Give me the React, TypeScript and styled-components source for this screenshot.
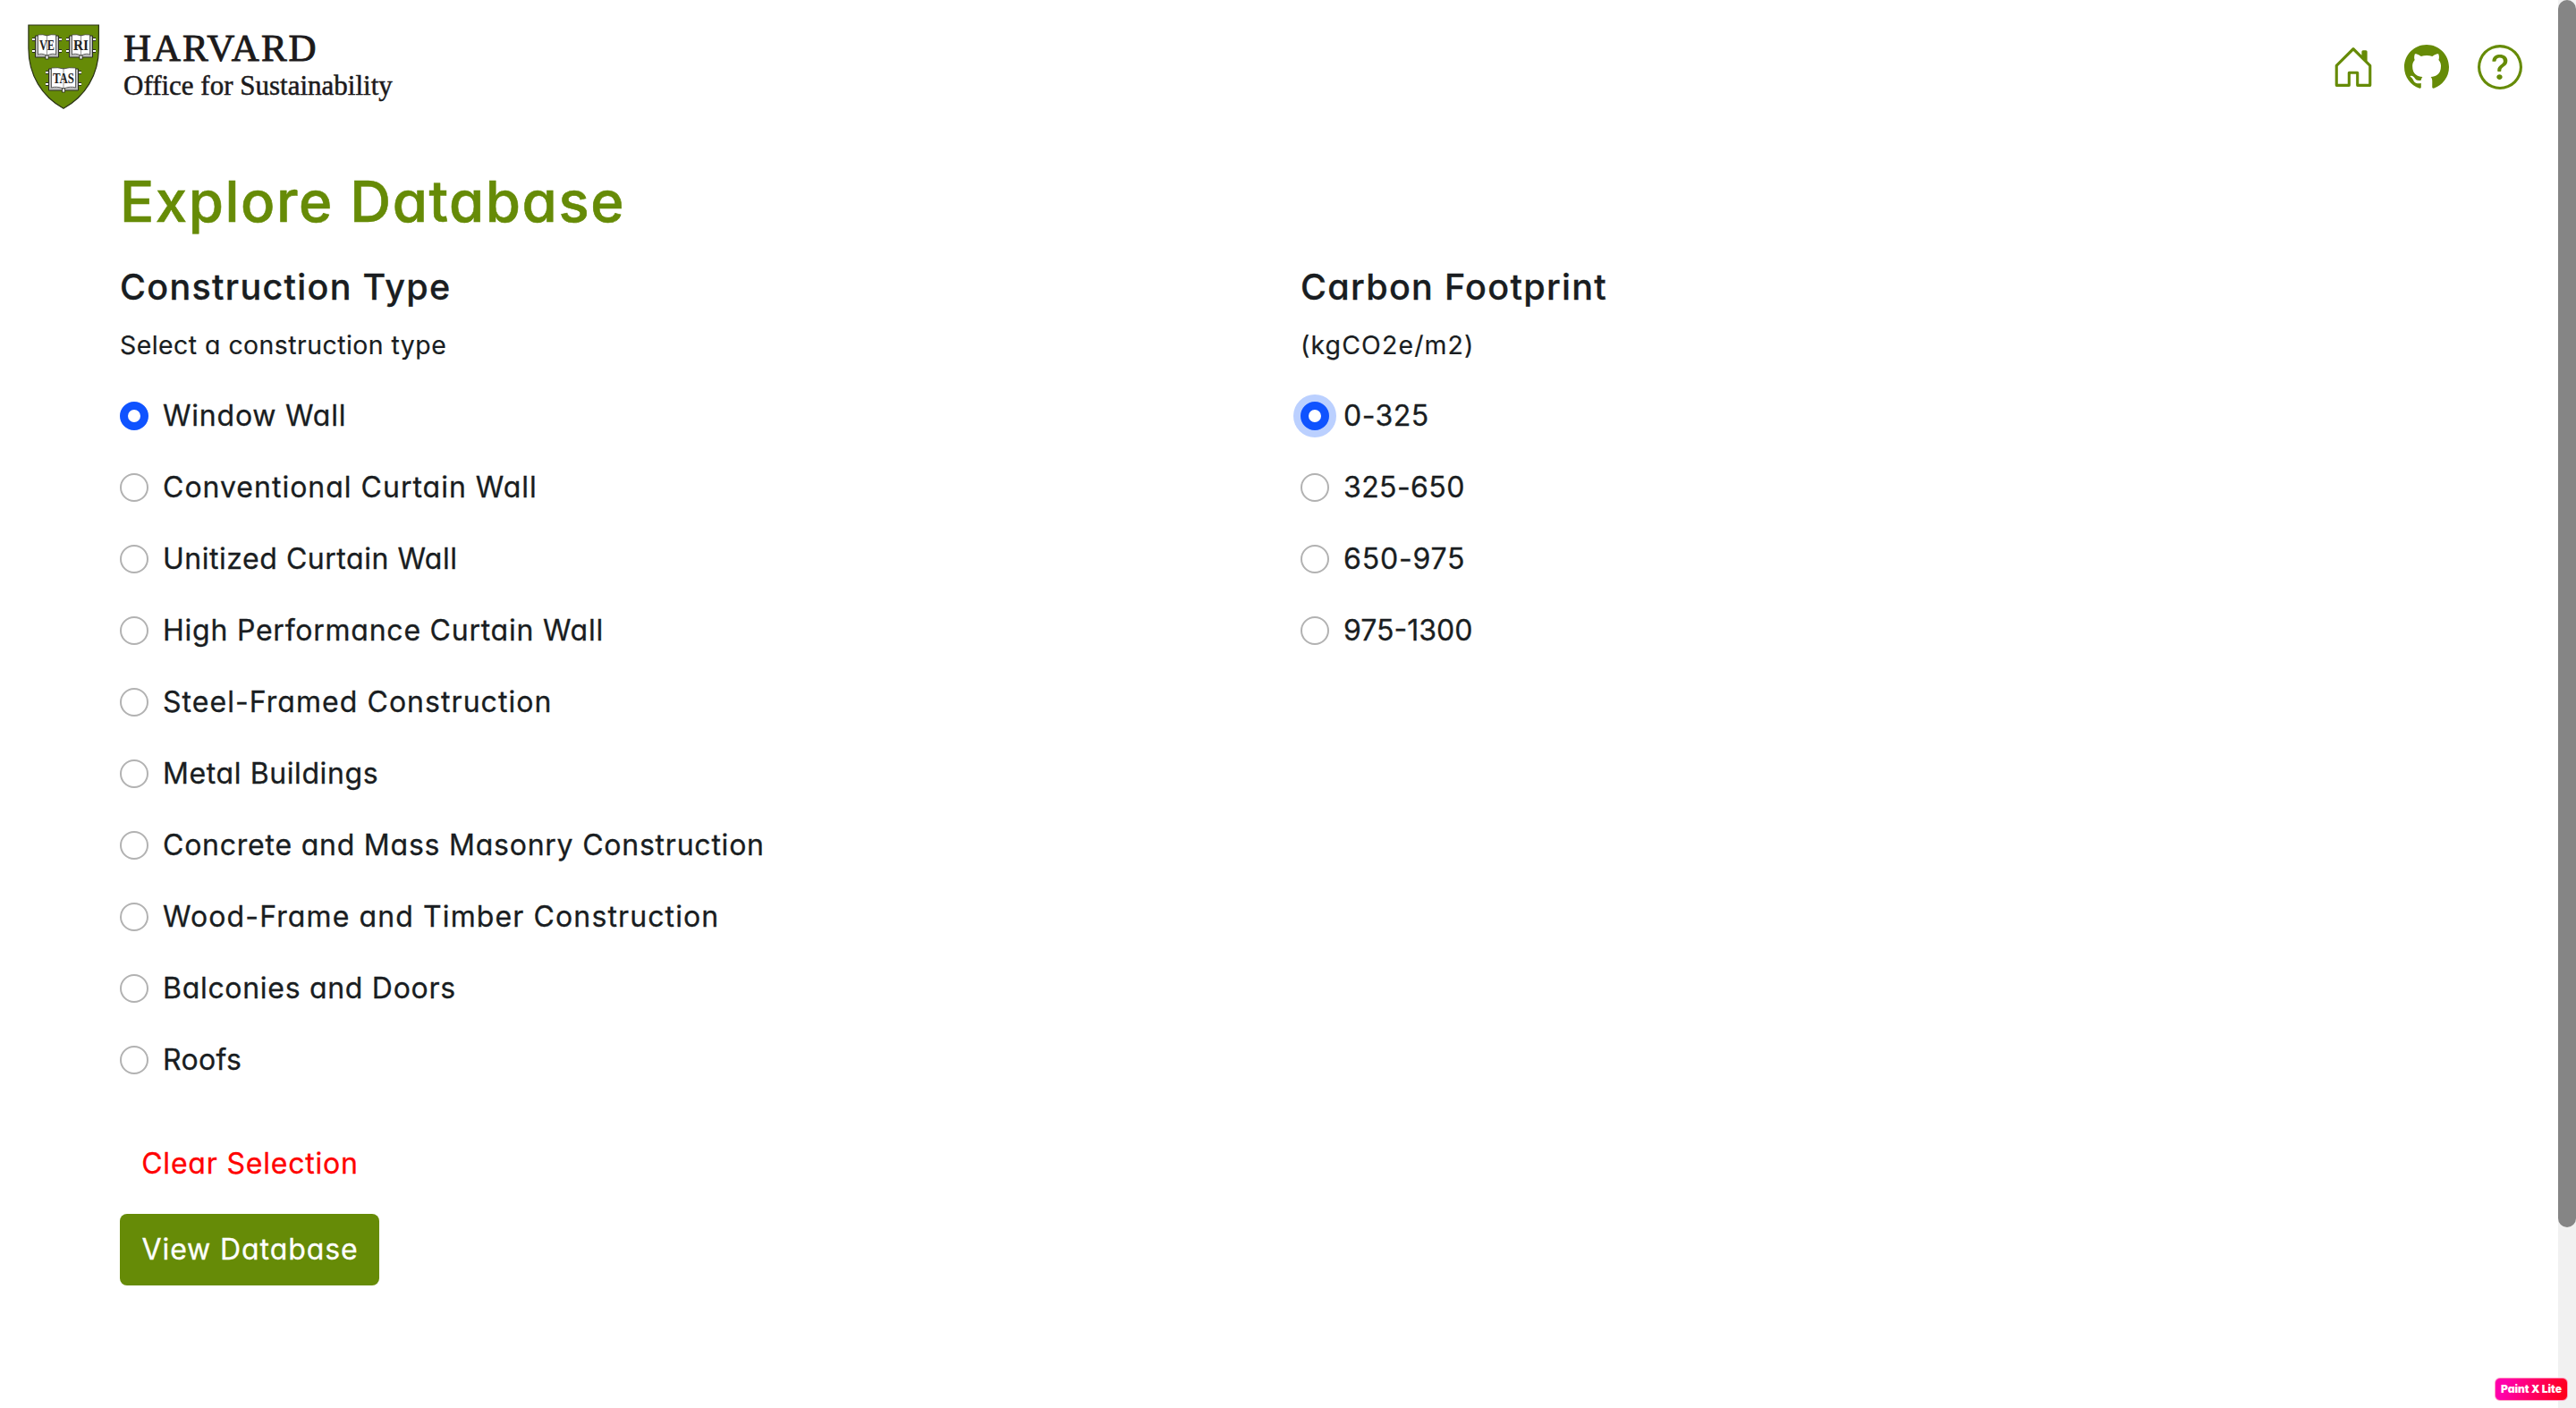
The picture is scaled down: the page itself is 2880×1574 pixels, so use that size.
import React, { useState } from "react";
import styled, { createGlobalStyle, css } from "styled-components";
import { BsGithub, BsHouseDoor, BsQuestionCircle } from "react-icons/bs";

const green = "#668b07";
const ink = "#191d21";
const blue = "#0f53ff";

const GlobalStyle = createGlobalStyle`
  * { box-sizing: border-box; }
  body {
    margin: 0;
    background: #fff;
    color: ${ink};
    font-family: Inter, "Noto Sans", sans-serif;
    font-feature-settings: "cv11";
    overflow: hidden;
  }
`;

const Window = styled.div`
  display: flex;
  height: 100vh;
`;

const Page = styled.div`
  flex: 1;
  min-width: 0;
`;

const Header = styled.header`
  display: flex;
  justify-content: space-between;
  align-items: center;
  height: 150px;
  padding: 0 40px 0 31px;
`;

const Brand = styled.div`
  display: flex;
  align-items: center;
`;

const Crest = styled.svg`
  width: 80px;
  height: 96px;
  margin-right: 27px;
`;

const Wordmark = styled.div`
  display: flex;
  flex-direction: column;
  padding-bottom: 2px;
  font-family: "Liberation Serif", serif;
  font-feature-settings: normal;
  color: #1c1a1b;
  white-space: nowrap;
`;

const University = styled.span`
  font-size: 43px;
  line-height: 42px;
  letter-spacing: 2px;
  -webkit-text-stroke: 0.9px #1c1a1b;
`;

const Office = styled.span`
  font-size: 31px;
  line-height: 41px;
  -webkit-text-stroke: 0.5px #1c1a1b;
`;

const Nav = styled.nav`
  display: flex;
  gap: 32px;
  color: ${green};
`;

const NavLink = styled.a`
  display: flex;
  svg {
    width: 50px;
    height: 50px;
  }
`;

const Main = styled.main`
  padding: 37px 86px 0 134px;
`;

const Title = styled.h1`
  margin: 0 0 34px;
  font-size: 63.5px;
  font-weight: 500;
  line-height: 76px;
  letter-spacing: 1.55px;
  color: ${green};
  -webkit-text-stroke: 0.6px ${green};
`;

const Columns = styled.div`
  display: grid;
  grid-template-columns: 1320px 1fr;
`;

const Heading = styled.h2`
  margin: 0 0 20px;
  font-size: 39.5px;
  font-weight: 500;
  line-height: 48px;
  letter-spacing: 1.3px;
  -webkit-text-stroke: 0.3px ${ink};
`;

const Hint = styled.p<{ $tracking: number }>`
  margin: 0 0 34px;
  font-size: 28.4px;
  line-height: 42px;
  letter-spacing: ${(p) => p.$tracking}px;
  -webkit-text-stroke: 0.2px ${ink};
`;

const Options = styled.div`
  display: flex;
  flex-direction: column;
  align-items: flex-start;
  gap: 32px;
`;

const Option = styled.label`
  display: flex;
  align-items: center;
  gap: 16px;
  height: 48px;
`;

const Caption = styled.span<{ $tracking: number }>`
  font-size: 32px;
  line-height: 40px;
  letter-spacing: ${(p) => p.$tracking}px;
  white-space: nowrap;
  -webkit-text-stroke: 0.3px ${ink};
`;

const Radio = styled.input<{ $ring: boolean }>`
  appearance: none;
  width: 32px;
  height: 32px;
  margin: 0;
  border: 2px solid #b2b2b2;
  border-radius: 50%;
  background: #fff;
  &:checked {
    border: 9px solid ${blue};
  }
  ${(p) =>
    p.$ring &&
    css`
      box-shadow: 0 0 0 8px #bbd0ff;
    `}
`;

const Actions = styled.div`
  display: flex;
  flex-direction: column;
  align-items: flex-start;
  gap: 16px;
  margin-top: 52px;
`;

const Button = styled.button<{ $primary?: boolean }>`
  width: 290px;
  height: 80px;
  padding: 0 0 2px 1px;
  border: 0;
  border-radius: 8px;
  font: 400 32px Inter, "Noto Sans", sans-serif;
  font-feature-settings: "cv11";
  letter-spacing: ${(p) => (p.$primary ? 0.9 : 0.8)}px;
  color: ${(p) => (p.$primary ? "#fff" : "#ff0000")};
  background: ${(p) => (p.$primary ? green : "transparent")};
  -webkit-text-stroke: 0.3px currentColor;
`;

const ScrollTrack = styled.div`
  width: 20px;
  background: #f1f1f1;
`;

const ScrollThumb = styled.div`
  height: 1372px;
  border-radius: 10px;
  background: #858585;
`;

const Badge = styled.div`
  position: absolute;
  right: 9px;
  bottom: 8px;
  display: flex;
  align-items: center;
  justify-content: center;
  width: 82px;
  height: 26px;
  padding-bottom: 1px;
  border: 1px solid #ff9fc4;
  border-radius: 6px;
  background: linear-gradient(110deg, #ff00ab 15%, #ff0019 95%);
  color: #fff;
  font-size: 12px;
  font-weight: 900;
  white-space: nowrap;
`;

type Choice = { label: string; tracking: number };

const constructionTypes: Choice[] = [
  { label: "Window Wall", tracking: 0.79 },
  { label: "Conventional Curtain Wall", tracking: 1.0 },
  { label: "Unitized Curtain Wall", tracking: 0.53 },
  { label: "High Performance Curtain Wall", tracking: 0.76 },
  { label: "Steel-Framed Construction", tracking: 1.05 },
  { label: "Metal Buildings", tracking: 0.6 },
  { label: "Concrete and Mass Masonry Construction", tracking: 0.77 },
  { label: "Wood-Frame and Timber Construction", tracking: 1.11 },
  { label: "Balconies and Doors", tracking: 0.7 },
  { label: "Roofs", tracking: 0.35 },
];

const footprints: Choice[] = [
  { label: "0-325", tracking: 0.5 },
  { label: "325-650", tracking: 0.4 },
  { label: "650-975", tracking: 0.8 },
  { label: "975-1300", tracking: 0 },
];

// An open book with clasps on both sides and a bookmark under the spine.
function Book({ x, y, w, word, size }: { x: number; y: number; w: number; word: string; size: number }) {
  const h = 23;
  const mid = w / 2;
  return (
    <g transform={`translate(${x} ${y})`}>
      {[5, 18].map((cy) => (
        <path key={cy} d={`M-3.5 ${cy}H${w + 3.5}`} stroke="#2b2e22" strokeWidth="4" />
      ))}
      {[5, 18].map((cy) => (
        <path key={cy} d={`M-3.5 ${cy}H${w + 3.5}`} stroke="#fff" strokeWidth="2.2" />
      ))}
      <path d={`M0 1H${w}V${h + 2}H0Z`} fill="#bdbdbd" stroke="#2b2e22" strokeWidth="1" />
      <path
        d={`M3 0Q${mid / 2 + 2} -1 ${mid} 1Q${w - mid / 2 - 2} -1 ${w - 3} 0V${h - 1}Q${w - mid / 2} ${h - 3} ${mid} ${h}Q${mid / 2} ${h - 3} 3 ${h - 1}Z`}
        fill="#fff"
        stroke="#444"
        strokeWidth="0.8"
      />
      <path d={`M${mid} 1V${h}`} stroke="#8a8a8a" strokeWidth="0.9" />
      <rect x={mid - 1.5} y={h} width="3" height="4" fill="#fff" stroke="#2b2e22" strokeWidth="0.8" />
      <text
        x={mid}
        y={17}
        textAnchor="middle"
        textLength={w - 9}
        lengthAdjust="spacingAndGlyphs"
        fontFamily="Liberation Serif, serif"
        fontSize={size}
        fontWeight="700"
        fill="#222"
      >
        {word}
      </text>
    </g>
  );
}

function Shield() {
  return (
    <Crest viewBox="31 27 80 96">
      <path
        d="M31.9 28H110.4V54C110.4 84 95 108 71 121.3C47 108 31.9 84 31.9 54Z"
        fill={green}
        stroke="#2b3318"
        strokeWidth="1.2"
      />
      <Book x={39.5} y={39} w={26} word="VE" size={16} />
      <Book x={77.5} y={39} w={26} word="RI" size={16} />
      <Book x={54.5} y={76} w={33} word="TAS" size={16} />
    </Crest>
  );
}

function RadioGroup(props: {
  name: string;
  choices: Choice[];
  value: string;
  focused?: boolean;
  onChange: (value: string) => void;
}) {
  return (
    <Options role="radiogroup">
      {props.choices.map(({ label, tracking }) => (
        <Option key={label}>
          <Radio
            type="radio"
            name={props.name}
            checked={props.value === label}
            $ring={!!props.focused && props.value === label}
            onChange={() => props.onChange(label)}
          />
          <Caption $tracking={tracking}>{label}</Caption>
        </Option>
      ))}
    </Options>
  );
}

export default function App() {
  const [type, setType] = useState("Window Wall");
  const [footprint, setFootprint] = useState("0-325");
  const clear = () => {
    setType("");
    setFootprint("");
  };

  return (
    <>
      <GlobalStyle />
      <Window>
        <Page>
          <Header>
            <Brand>
              <Shield />
              <Wordmark>
                <University>HARVARD</University>
                <Office>Office for Sustainability</Office>
              </Wordmark>
            </Brand>
            <Nav>
              <NavLink><BsHouseDoor /></NavLink>
              <NavLink><BsGithub /></NavLink>
              <NavLink><BsQuestionCircle /></NavLink>
            </Nav>
          </Header>
          <Main>
            <Title>Explore Database</Title>
            <Columns>
              <section>
                <Heading>Construction Type</Heading>
                <Hint $tracking={0.48}>Select a construction type</Hint>
                <RadioGroup name="type" choices={constructionTypes} value={type} onChange={setType} />
              </section>
              <section>
                <Heading>Carbon Footprint</Heading>
                <Hint $tracking={1.16}>(kgCO2e/m2)</Hint>
                <RadioGroup name="footprint" choices={footprints} value={footprint} focused onChange={setFootprint} />
              </section>
            </Columns>
            <Actions>
              <Button onClick={clear}>Clear Selection</Button>
              <Button $primary>View Database</Button>
            </Actions>
          </Main>
        </Page>
        <ScrollTrack>
          <ScrollThumb />
        </ScrollTrack>
      </Window>
      <Badge>Paint X Lite</Badge>
    </>
  );
}
